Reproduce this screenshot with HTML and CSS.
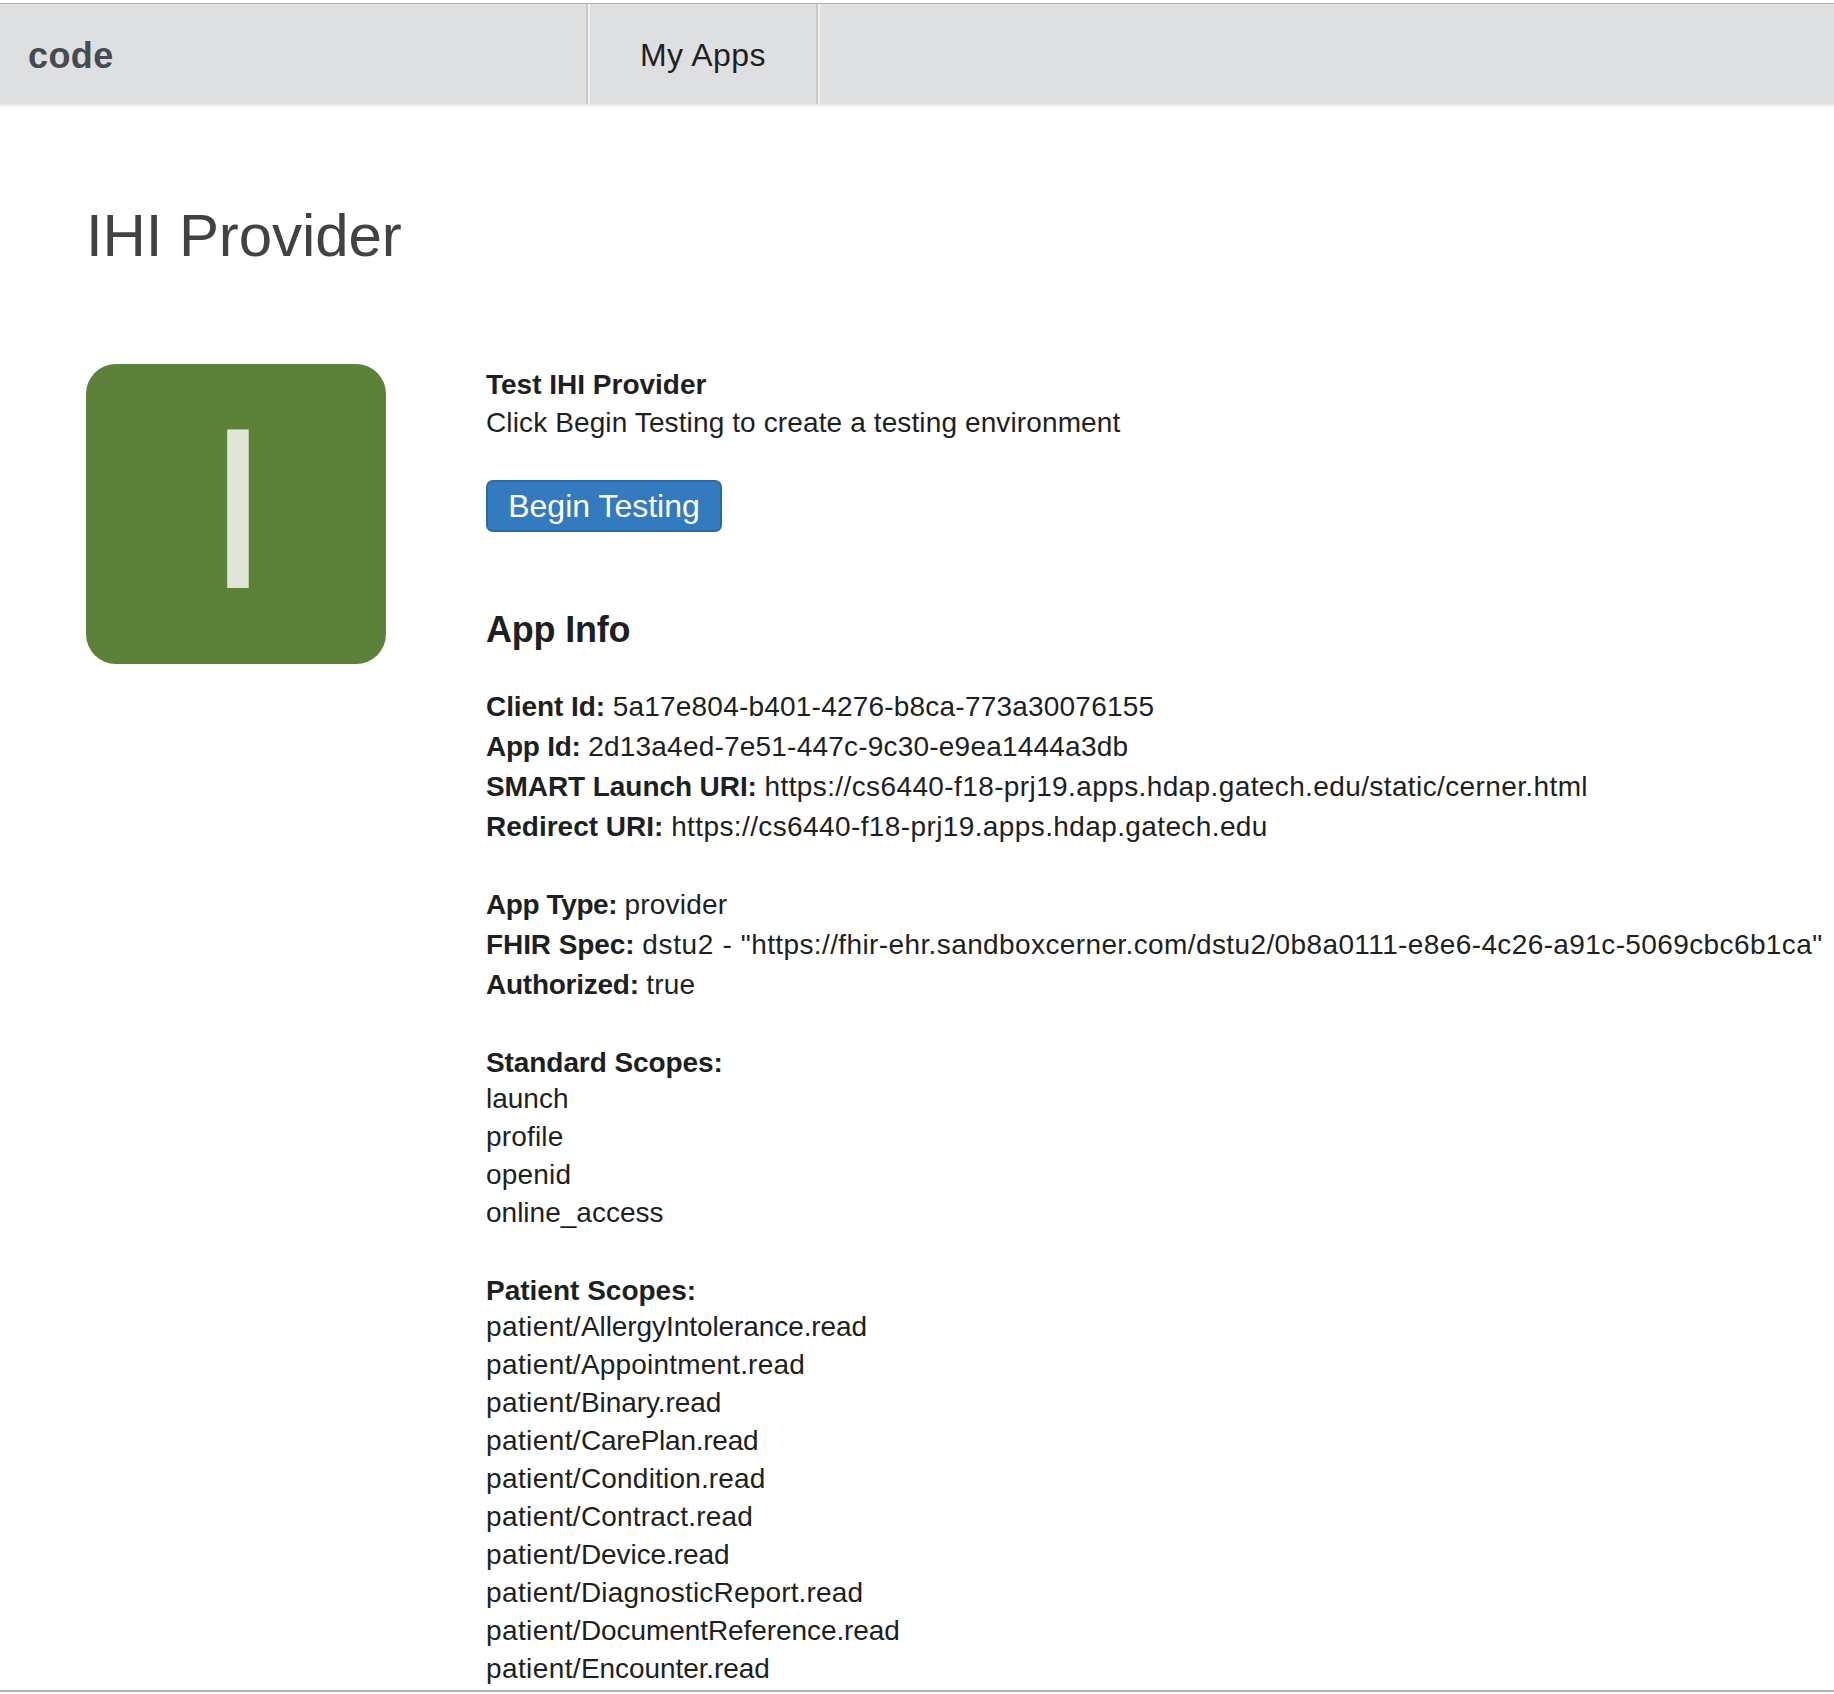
FILE: index.html
```html
<!DOCTYPE html>
<html lang="en">
<head>
<meta charset="utf-8">
<title>IHI Provider</title>
<link rel="stylesheet" href="styles.css">
</head>
<body>
<div class="page">
  <header class="topbar">
    <div class="brand">code</div>
    <nav class="nav-item">My Apps</nav>
    <div class="nav-rest"></div>
  </header>
  <main class="content">
    <h1 class="title">IHI Provider</h1>
    <div class="columns">
      <div class="app-icon">I</div>
      <div class="details">
        <section class="test">
          <h2 class="test-title">Test IHI Provider</h2>
          <p class="test-text">Click Begin Testing to create a testing environment</p>
          <button class="button">Begin Testing</button>
        </section>
        <h3 class="info-title">App Info</h3>
        <div class="group">
          <p><b class="snug">Client Id: </b><span class="id">5a17e804-b401-4276-b8ca-773a30076155</span></p>
          <p><b class="tight">App Id: </b><span class="id">2d13a4ed-7e51-447c-9c30-e9ea1444a3db</span></p>
          <p><b class="snug">SMART Launch URI: </b><span class="url">https://cs6440-f18-prj19.apps.hdap.gatech.edu/static/cerner.html</span></p>
          <p><b>Redirect URI: </b><span class="url">https://cs6440-f18-prj19.apps.hdap.gatech.edu</span></p>
        </div>
        <div class="group">
          <p><b class="tighter">App Type: </b><span class="loose">provider</span></p>
          <p><b class="snug">FHIR Spec: </b><span class="spec">dstu2 - </span><span class="url">"https://fhir-ehr.sandboxcerner.com/dstu2/0b8a0111-e8e6-4c26-a91c-5069cbc6b1ca"</span></p>
          <p><b class="tight">Authorized: </b><span class="loose">true</span></p>
        </div>
        <div class="scopes">
          <h4 class="snug">Standard Scopes:</h4>
          <ul>
            <li>launch</li>
            <li class="loose">profile</li>
            <li class="loose">openid</li>
            <li>online_access</li>
          </ul>
        </div>
        <div class="scopes">
          <h4>Patient Scopes:</h4>
          <ul>
            <li class="snug"><span class="url">patient/</span>AllergyIntolerance.read</li>
            <li class="loose"><span class="url">patient/</span>Appointment.read</li>
            <li class="snug"><span class="url">patient/</span>Binary.read</li>
            <li class="tight"><span class="url">patient/</span>CarePlan.read</li>
            <li class="loose"><span class="url">patient/</span>Condition.read</li>
            <li class="loose"><span class="url">patient/</span>Contract.read</li>
            <li class="snug"><span class="url">patient/</span>Device.read</li>
            <li class="loose"><span class="url">patient/</span>DiagnosticReport.read</li>
            <li class="snug"><span class="url">patient/</span>DocumentReference.read</li>
            <li class="snug"><span class="url">patient/</span>Encounter.read</li>
          </ul>
        </div>
      </div>
    </div>
  </main>
</div>
</body>
</html>
```
FILE: styles.css
```css
* { box-sizing: border-box; margin: 0; padding: 0; }

body {
  font-family: "Liberation Sans", Arial, sans-serif;
  font-size: 28px;
  color: #1d1f21;
  background: #fff;
}

.page {
  height: 1692px;
  padding-top: 3px;
  border-bottom: 2px solid #b2b2b2;
  overflow: hidden;
}

.topbar {
  display: flex;
  height: 101px;
  border-top: 1px solid #b0b0b1;
  background: #dedfe1;
  box-shadow: 0 1px 0 #e6e6e7, 0 2px 0 #efefef, 0 3px 0 #f6f6f6, 0 4px 0 #fbfbfb;
}

.brand {
  width: 588px;
  padding: 33px 0 0 28px;
  border-right: 2px solid #c8c9cb;
  font-size: 36px;
  line-height: 38px;
  font-weight: bold;
  letter-spacing: 0.4px;
  color: #454b50;
}

.nav-item {
  width: 230px;
  padding-top: 32px;
  border-left: 2px solid #f1f1f2;
  border-right: 2px solid #c8c9cb;
  font-size: 32px;
  line-height: 38px;
  letter-spacing: 0.5px;
  text-align: center;
}

.nav-rest { flex: 1; border-left: 2px solid #f1f1f2; }

.content { padding: 97px 0 0 86px; }

.title {
  height: 163px;
  font-size: 60px;
  line-height: 70px;
  font-weight: normal;
  letter-spacing: -0.1px;
  color: #424242;
}

.columns { display: flex; gap: 100px; }

.app-icon {
  flex: none;
  width: 300px;
  height: 300px;
  padding-left: 4px;
  border-radius: 30px;
  background: #5b8238;
  font-size: 230px;
  line-height: 290px;
  text-align: center;
  color: #dfe6d8;
}

.details { flex: none; white-space: nowrap; }

.test { height: 240px; padding-top: 2px; }
.test-title { font-size: 28px; line-height: 38px; }
.test-text { line-height: 38px; letter-spacing: 0.12px; }

.button {
  display: block;
  width: 236px;
  height: 52px;
  margin-top: 38px;
  padding-top: 1px;
  border: 2px solid #2a68a6;
  border-radius: 7px;
  background: #337abe;
  font: 32px/47px "Liberation Sans", Arial, sans-serif;
  color: #fff;
}

.info-title {
  height: 83px;
  padding-top: 1px;
  font-size: 36px;
  line-height: 50px;
  letter-spacing: -0.2px;
}

.group { margin-bottom: 38px; line-height: 40px; }
.group + .scopes { margin-top: -1px; }
.scopes { padding-top: 3px; margin-bottom: 38px; }
.scopes h4 { height: 35px; font-size: 28px; line-height: 36px; }
.scopes ul { list-style: none; line-height: 38px; }

/* Tracking */
.tighter { letter-spacing: -0.4px; }
.tight { letter-spacing: -0.25px; }
.snug { letter-spacing: -0.08px; }
.loose { letter-spacing: 0.18px; }
.id { letter-spacing: 0.21px; }
.url { letter-spacing: 0.39px; }
.spec { letter-spacing: 0.65px; }
```
